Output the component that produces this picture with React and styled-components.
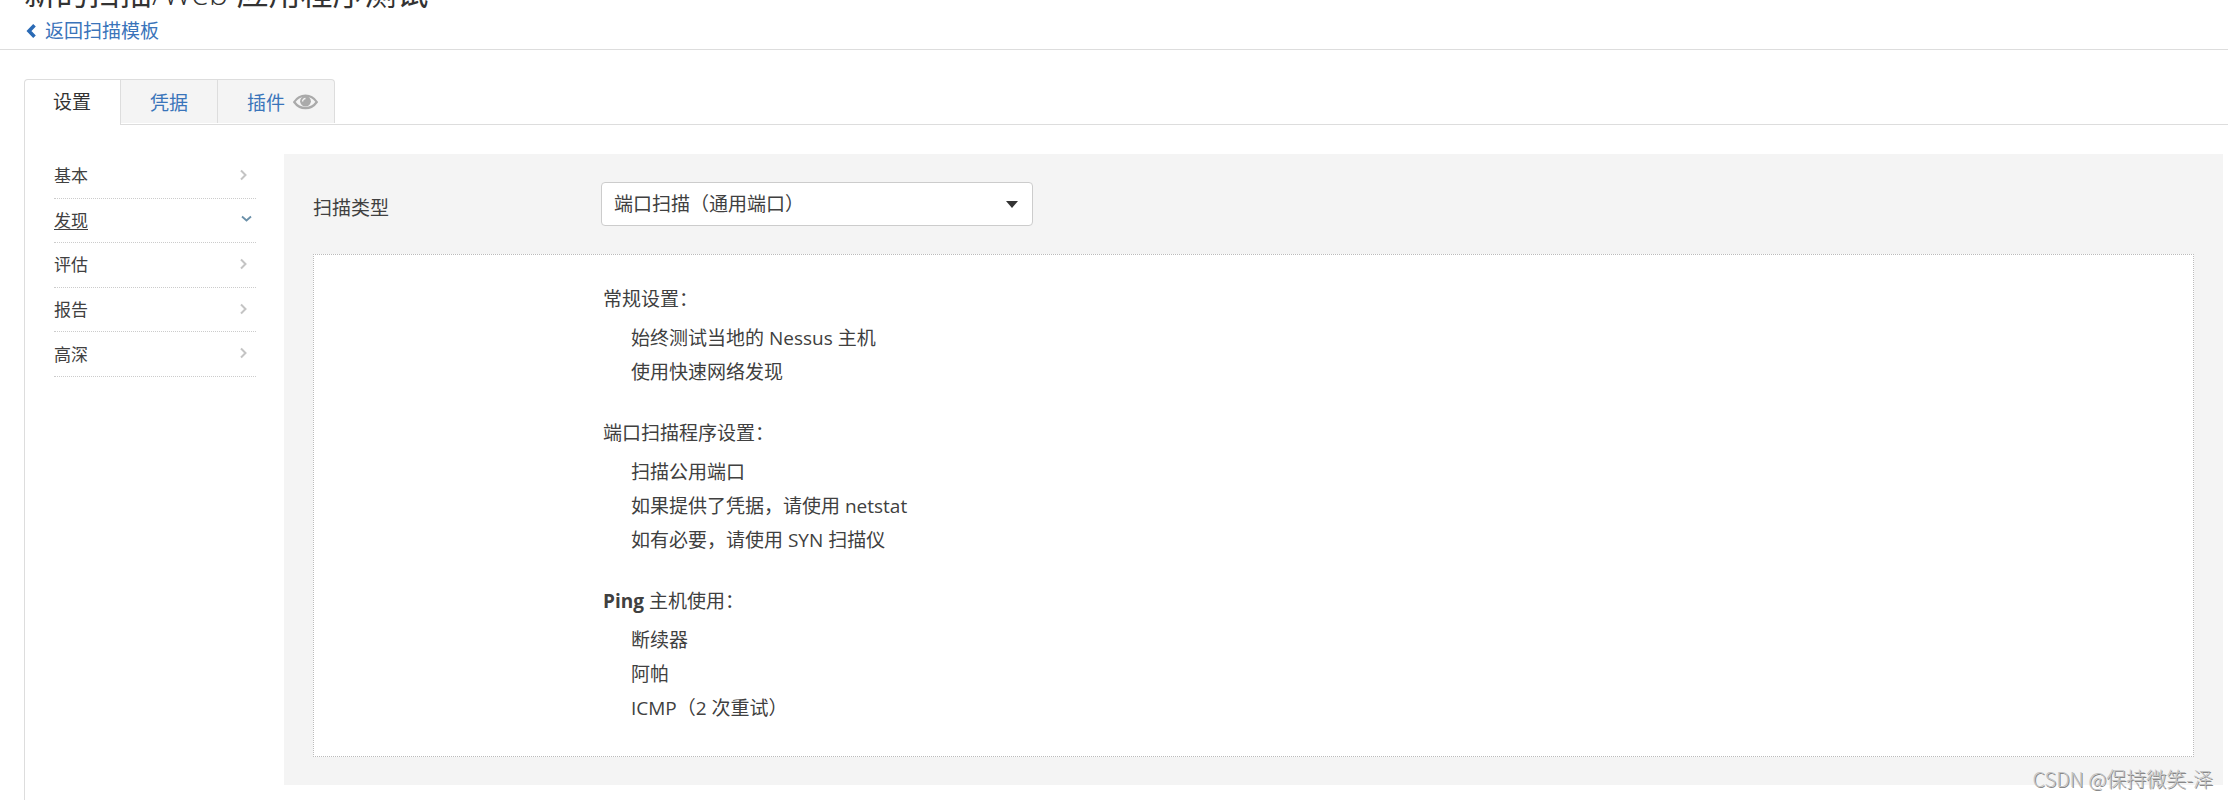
import React from 'react';
import styled, { createGlobalStyle } from 'styled-components';

const GlobalStyle = createGlobalStyle`
  * { box-sizing: border-box; }
  body {
    margin: 0;
    background: #fff;
    color: #404040;
    font-family: "Open Sans", "Noto Sans CJK SC", sans-serif;
    font-size: 19px;
    font-weight: 400;
  }
`;

const Page = styled.div`
  position: relative;
  min-height: 100vh;
  display: flex;
  flex-direction: column;
  overflow: hidden;
`;

const Header = styled.header`
  padding: 0 24px;
  margin-top: -29px;
  height: 79px;
  border-bottom: 1px solid #ddd;
`;

const Title = styled.h1`
  margin: 0;
  color: #333;
  font-size: 32px;
  line-height: 44px;
  font-weight: 400;
`;

const TitleLatin = styled.span`
  font-weight: 300;
`;

const BackLink = styled.a`
  display: inline-flex;
  align-items: center;
  gap: 9px;
  padding-left: 2px;
  line-height: 32px;
  color: #3a74ba;
  text-decoration: none;
`;

const Main = styled.main`
  flex: 1;
  display: flex;
  flex-direction: column;
  padding: 29px 0 0 24px;
`;

const Tabs = styled.nav`
  display: flex;
  align-items: flex-start;
  height: 45px;
`;

const Tab = styled.button`
  display: flex;
  align-items: center;
  gap: 8px;
  height: ${(p) => (p.$active ? 46 : 44)}px;
  padding: ${(p) => (p.$active ? '0 29px 4px 28px' : p.$wide ? '0 16px 0 29px' : '0 29px')};
  border: 1px solid #ddd;
  border-left-width: ${(p) => (p.$active ? 1 : 0)}px;
  border-bottom: 0;
  background: ${(p) => (p.$active ? '#fff' : '#f4f4f4')};
  color: ${(p) => (p.$active ? '#333' : '#3a74ba')};
  font: inherit;
  position: relative;
  z-index: 1;
  &:first-child { border-top-left-radius: 4px; }
  &:last-child { border-top-right-radius: 4px; }
`;

const Panel = styled.div`
  flex: 1;
  display: flex;
  align-items: flex-start;
  gap: 28px;
  padding: 29px 5px 13px 29px;
  border: 1px solid #ddd;
  border-width: 1px 0 0 1px;
`;

const SideNav = styled.nav`
  flex: 0 0 202px;
  display: flex;
  flex-direction: column;
  height: 223px;
`;

const SideItem = styled.a`
  flex: 1;
  display: flex;
  align-items: center;
  justify-content: space-between;
  padding: 0 ${(p) => (p.$open ? 4 : 8)}px 2px 0;
  border-bottom: 1px dotted #ccc;
  color: #404040;
  font-size: 17px;
  text-decoration: ${(p) => (p.$open ? 'underline' : 'none')};
  text-underline-offset: 2px;
`;

const Settings = styled.section`
  flex: 1;
  padding: 28px 29px;
  background: #f4f4f4;
`;

const Field = styled.div`
  display: flex;
  align-items: center;
  margin-bottom: 28px;
`;

const FieldLabel = styled.label`
  flex: 0 0 288px;
  padding-top: 6px;
`;

const SelectWrap = styled.div`
  flex: 0 1 432px;
  display: grid;
  align-items: center;
  > * { grid-area: 1 / 1; }
  > svg { justify-self: end; margin-right: 15px; pointer-events: none; }
`;

const Select = styled.select`
  appearance: none;
  width: 100%;
  height: 44px;
  padding: 0 40px 0 12px;
  border: 1px solid #ccc;
  border-radius: 4px;
  background: #fff;
  color: #404040;
  font: inherit;
`;

const Summary = styled.div`
  display: flex;
  flex-direction: column;
  gap: 27px;
  padding: 27px 28px 31px 289px;
  border: 1px dotted #bbb;
  background: #fff;
`;

const GroupTitle = styled.h2`
  margin: 0 0 5px;
  font-size: 19px;
  line-height: 34px;
  font-weight: 400;
  strong { font-weight: 700; }
`;

const List = styled.ul`
  margin: 0;
  padding: 0 0 0 28px;
  list-style: none;
  line-height: 34px;
`;

const Watermark = styled.div`
  position: absolute;
  right: 15px;
  bottom: 7px;
  font-family: "Noto Sans CJK SC", sans-serif;
  font-size: 20px;
  font-weight: 300;
  line-height: 28px;
  color: #c4c4c4;
  text-shadow: 1px 1px 0 #888;
`;

const Chevron = () => (
  <svg width="9" height="12" viewBox="0 0 9 12" fill="none" stroke="#c4c4c4" strokeWidth="2" aria-hidden="true">
    <path d="M2 1.5 6.5 6 2 10.5" />
  </svg>
);

const ChevronOpen = () => (
  <svg width="11" height="8" viewBox="0 0 11 8" fill="none" stroke="#6b90a9" strokeWidth="1.800" aria-hidden="true">
    <path d="M1 1.500 5.500 5.500 10 1.500" />
  </svg>
);

const Eye = () => (
  <svg width="25" height="16" viewBox="0 0 25 16" fill="none" stroke="#aaa" aria-hidden="true">
    <path d="M1.200 8C7-.5 18-.5 23.800 8 18 16.200 7 16.200 1.200 8Z" strokeWidth="2.200" />
    <circle cx="12.500" cy="7.200" r="5.400" fill="#aaa" stroke="none" />
    <path d="M9.600 7.500a2.900 2.900 0 0 1 2.900-3" stroke="#f4f4f4" strokeWidth="1.400" />
  </svg>
);

const sections = ['基本', '发现', '评估', '报告', '高深'];

const groups = [
  { title: '常规设置：', items: ['始终测试当地的 Nessus 主机', '使用快速网络发现'] },
  {
    title: '端口扫描程序设置：',
    items: ['扫描公用端口', '如果提供了凭据，请使用 netstat', '如有必要，请使用 SYN 扫描仪'],
  },
  {
    title: <><strong>Ping</strong> 主机使用：</>,
    items: ['断续器', '阿帕', 'ICMP（2 次重试）'],
  },
];

export default function App() {
  return (
    <Page>
      <GlobalStyle />
      <Header>
        <Title>新的扫描<TitleLatin>/Web</TitleLatin> 应用程序测试</Title>
        <BackLink href="#templates">
          <svg width="10" height="14" viewBox="0 0 10 14" fill="none" stroke="#2a6ab5" strokeWidth="3.600" aria-hidden="true">
            <path d="M8.500 1.300 3 7l5.500 5.700" />
          </svg>
          返回扫描模板
        </BackLink>
      </Header>
      <Main>
        <Tabs>
          <Tab $active>设置</Tab>
          <Tab>凭据</Tab>
          <Tab $wide>插件 <Eye /></Tab>
        </Tabs>
        <Panel>
          <SideNav>
            {sections.map((name) => (
              <SideItem key={name} href="#settings" $open={name === '发现'}>
                {name}
                {name === '发现' ? <ChevronOpen /> : <Chevron />}
              </SideItem>
            ))}
          </SideNav>
          <Settings>
            <Field>
              <FieldLabel htmlFor="scan-type">扫描类型</FieldLabel>
              <SelectWrap>
                <Select id="scan-type">
                  <option>端口扫描（通用端口）</option>
                </Select>
                <svg width="12" height="7" viewBox="0 0 12 7" fill="#333" aria-hidden="true">
                  <path d="M0 0h12L6 7Z" />
                </svg>
              </SelectWrap>
            </Field>
            <Summary>
              {groups.map((group, i) => (
                <div key={i}>
                  <GroupTitle>{group.title}</GroupTitle>
                  <List>
                    {group.items.map((item, j) => <li key={j}>{item}</li>)}
                  </List>
                </div>
              ))}
            </Summary>
          </Settings>
        </Panel>
      </Main>
      <Watermark>CSDN @保持微笑-泽</Watermark>
    </Page>
  );
}
